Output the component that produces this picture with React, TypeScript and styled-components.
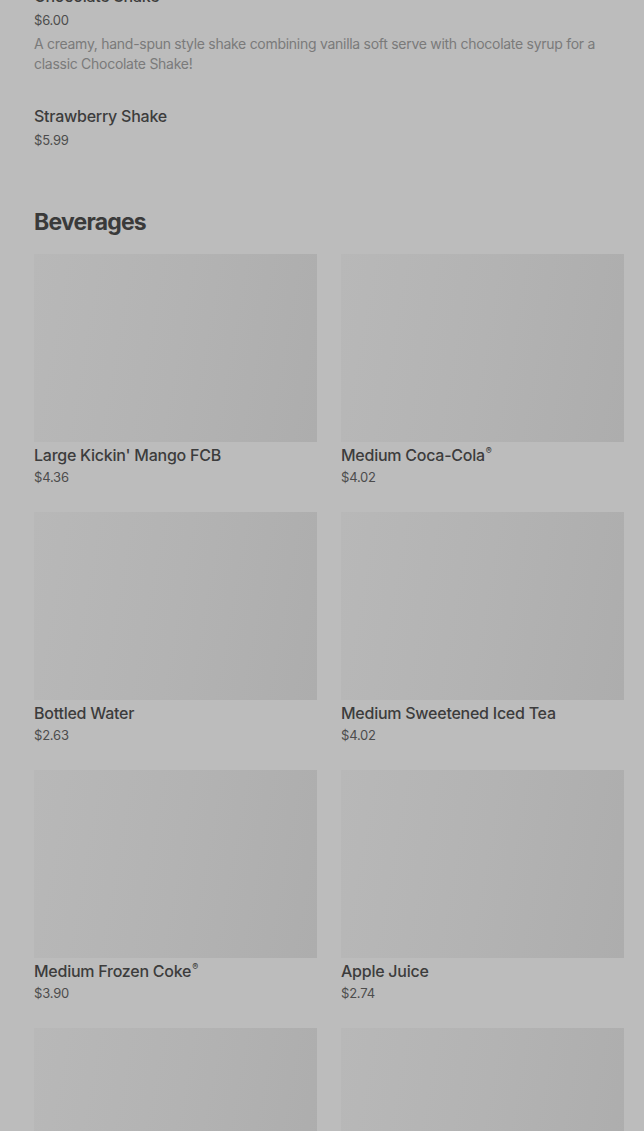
import React from 'react';
import styled, { createGlobalStyle } from 'styled-components';

const GlobalStyle = createGlobalStyle`
  html, body {
    margin: 0;
    padding: 0;
    background: #bcbcbc;
    overflow: hidden;
  }
  body {
    font-family: Inter, "Noto Sans", "Liberation Sans", sans-serif;
    -webkit-font-smoothing: antialiased;
  }
`;

const Page = styled.main`
  padding: 0 20px 0 34px;
  margin-top: -16px;
`;

const ItemList = styled.ul`
  list-style: none;
  margin: 0;
  padding: 0;
  display: flex;
  flex-direction: column;
  gap: 30px;
`;

const Item = styled.li`
  display: flex;
  flex-direction: column;
`;

const ItemTitle = styled.div`
  font-size: 16px;
  line-height: 24px;
  font-weight: 500;
  color: #3c3c3c;
  letter-spacing: -0.25px;
`;

const Price = styled.div<{ $tight?: boolean }>`
  font-size: 13px;
  line-height: ${(p) => (p.$tight ? '21px' : '24px')};
  color: #4c4c4c;
  letter-spacing: -0.2px;
`;

const Description = styled.p`
  margin: 2px 0 0;
  font-size: 14px;
  line-height: 20px;
  color: #7a7a7a;
  letter-spacing: -0.28px;
  max-width: 580px;
`;

const Section = styled.section`
  margin-top: 54px;
`;

const SectionTitle = styled.h2`
  margin: 0 0 16px;
  font-size: 23px;
  line-height: 32px;
  font-weight: 700;
  color: #3a3a3a;
  letter-spacing: -0.8px;
`;

const Grid = styled.div`
  display: grid;
  grid-template-columns: 1fr 1fr;
  column-gap: 24px;
  row-gap: 24px;
`;

const Card = styled.div`
  display: flex;
  flex-direction: column;
`;

const Thumb = styled.div`
  height: 188px;
  margin-bottom: 1px;
  background: linear-gradient(100deg, #b8b8b8 0%, #b3b3b3 50%, #adadad 100%);
`;

const Sup = styled.sup`
  font-size: 9px;
  vertical-align: top;
  line-height: 16px;
  margin-left: 1px;
`;

type Drink = { name: string; reg?: boolean; price: string };

const drinks: Drink[] = [
  { name: "Large Kickin' Mango FCB", price: '$4.36' },
  { name: 'Medium Coca-Cola', reg: true, price: '$4.02' },
  { name: 'Bottled Water', price: '$2.63' },
  { name: 'Medium Sweetened Iced Tea', price: '$4.02' },
  { name: 'Medium Frozen Coke', reg: true, price: '$3.90' },
  { name: 'Apple Juice', price: '$2.74' },
  { name: 'Medium Sprite', reg: true, price: '$4.02' },
  { name: 'Medium Dr Pepper', reg: true, price: '$4.02' },
];

export default function App() {
  return (
    <>
      <GlobalStyle />
      <Page>
        <ItemList>
          <Item>
            <ItemTitle>Chocolate Shake</ItemTitle>
            <Price>$6.00</Price>
            <Description>
              A creamy, hand-spun style shake combining vanilla soft serve with chocolate syrup for a
              classic Chocolate Shake!
            </Description>
          </Item>
          <Item>
            <ItemTitle>Strawberry Shake</ItemTitle>
            <Price>$5.99</Price>
          </Item>
        </ItemList>

        <Section>
          <SectionTitle>Beverages</SectionTitle>
          <Grid>
            {drinks.map((d) => (
              <Card key={d.name}>
                <Thumb />
                <ItemTitle>
                  {d.name}
                  {d.reg && <Sup>®</Sup>}
                </ItemTitle>
                <Price $tight>{d.price}</Price>
              </Card>
            ))}
          </Grid>
        </Section>
      </Page>
    </>
  );
}
